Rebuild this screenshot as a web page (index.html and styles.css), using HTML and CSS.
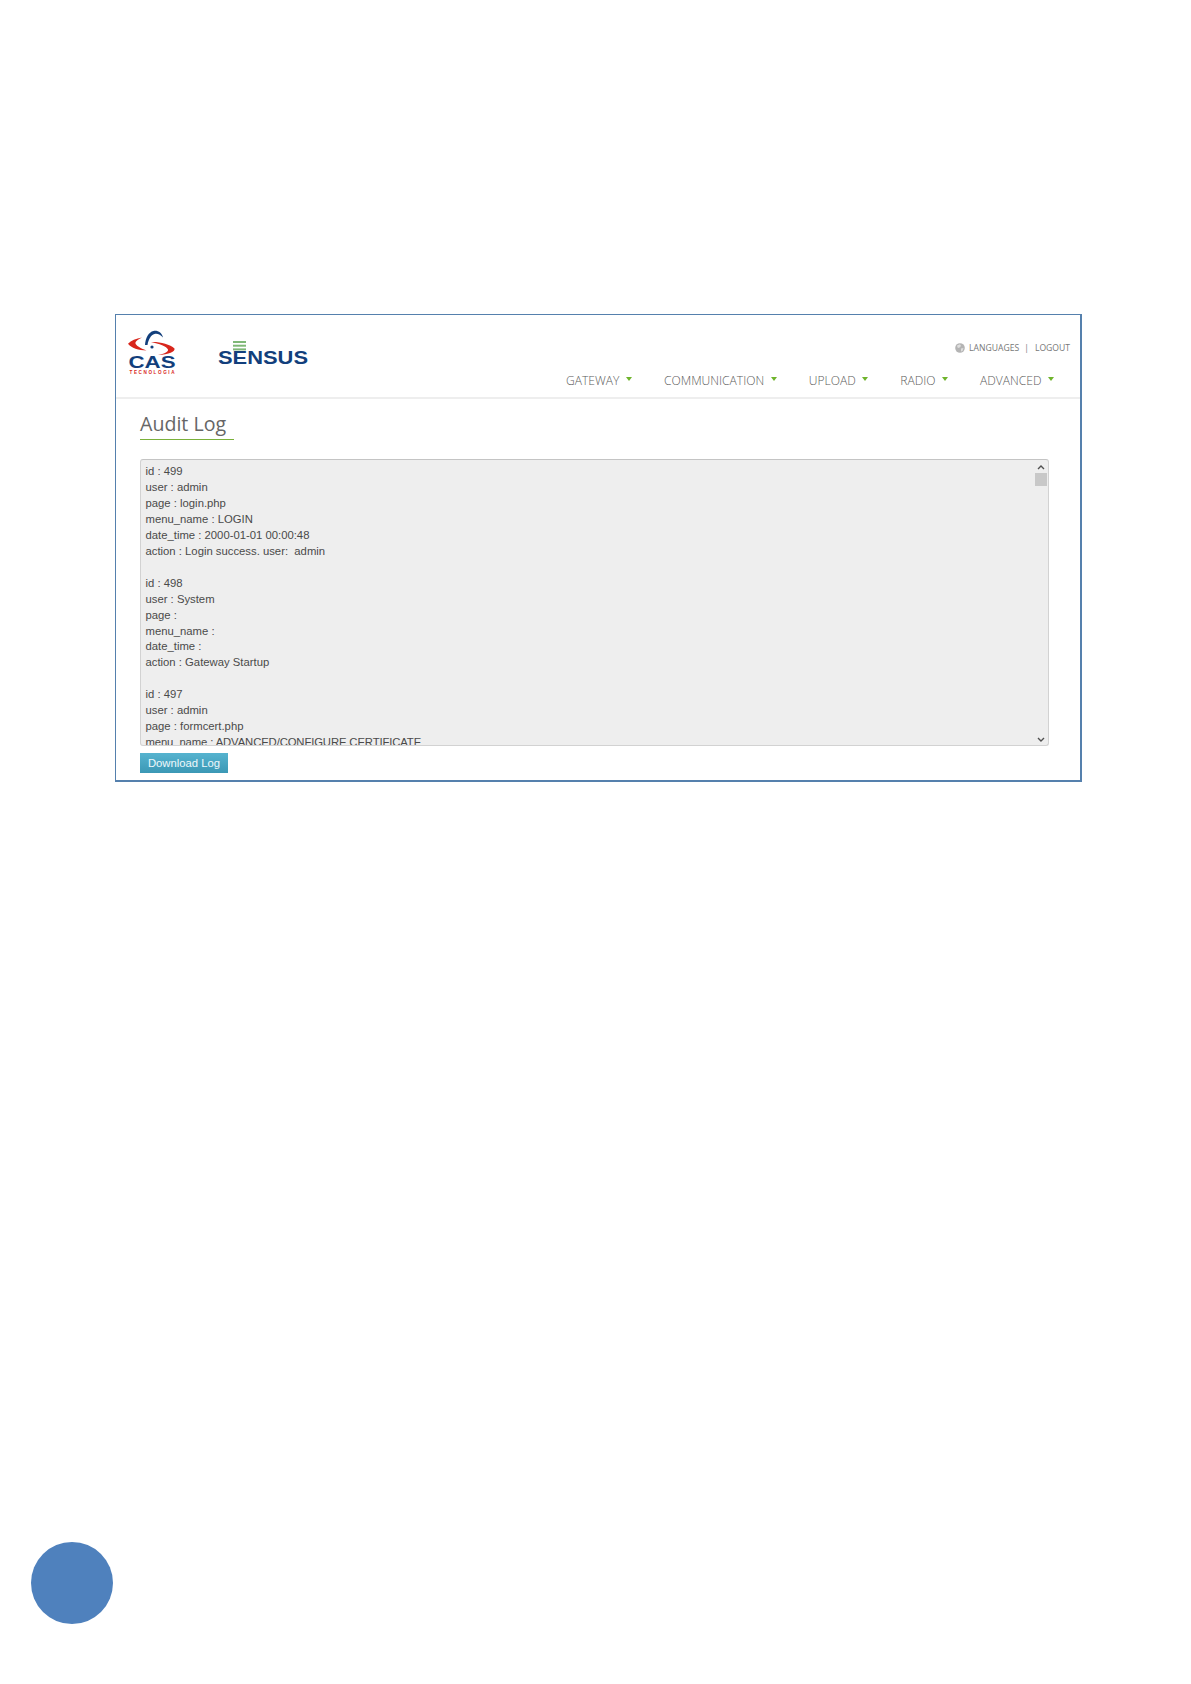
FILE: index.html
```html
<!DOCTYPE html>
<html lang="en">
<head>
<meta charset="utf-8">
<title>Audit Log</title>
<link rel="stylesheet" href="styles.css">
</head>
<body>
<main class="page">
  <section class="frame">
    <header class="header">
      <div class="logos">
        <svg class="logo-cas" viewBox="0 0 54 46" width="54" height="46" aria-label="CAS Tecnologia">
          <path d="M0 13.8 C3 10.5 8 8.5 14 7.5 C10 9.5 7 11.5 7.5 13.5 C8 15.5 12 18 18.5 20.5 C11 20.5 3 18 0 13.8Z" fill="#d8261c"/>
          <path d="M17 15 C17.5 8 20.5 2 25.5 1 C30 0.2 34 3 35 7.5 C32.5 4.8 29.5 3.2 26.5 4 C23 5 20.5 9 19.5 15Z" fill="#123f7c"/>
          <circle cx="24" cy="17" r="1.6" fill="#123f7c"/>
          <path d="M23 12 C31 11.5 42 14 46.5 18.5 C47.5 21.5 41 24.5 30 25 C36 23.8 40.5 22 40 19.5 C39 16.5 31 13.5 23 12Z" fill="#d8261c"/>
          <text class="cas-word" x="24" y="38" text-anchor="middle" textLength="47" lengthAdjust="spacingAndGlyphs">CAS</text>
          <text class="cas-sub" x="24" y="44" text-anchor="middle" textLength="45" lengthAdjust="spacing">TECNOLOGIA</text>
        </svg>
        <svg class="logo-sensus" viewBox="0 0 92 26" width="92" height="26" aria-label="Sensus">
          <rect class="bar" x="15" y="0" width="13" height="2"/>
          <rect class="bar" x="15" y="3.7" width="13" height="2"/>
          <rect class="bar" x="15" y="7.4" width="13" height="2"/>
          <text class="sensus-word" x="0" y="23" textLength="90" lengthAdjust="spacingAndGlyphs">SENSUS</text>
        </svg>
      </div>
      <div class="header-right">
        <div class="util">
          <svg class="globe" viewBox="0 0 10 10" width="10" height="10" aria-hidden="true">
            <circle cx="5" cy="5" r="4.8" fill="#b4b4b4"/>
            <path d="M2 2.5 L5 1.2 L6 3 L4 5 L2.5 4.5Z M6 5.5 L8.5 5 L7.5 8 L6 8.5Z" fill="#dedede"/>
          </svg>
          <span class="util-link">LANGUAGES</span>
          <span class="util-sep">|</span>
          <span class="util-link">LOGOUT</span>
        </div>
        <nav class="nav">
          <span class="nav-item">GATEWAY<i class="caret"></i></span>
          <span class="nav-item">COMMUNICATION<i class="caret"></i></span>
          <span class="nav-item">UPLOAD<i class="caret"></i></span>
          <span class="nav-item">RADIO<i class="caret"></i></span>
          <span class="nav-item">ADVANCED<i class="caret"></i></span>
        </nav>
      </div>
    </header>
    <div class="content">
      <h1 class="title">Audit Log</h1>
      <div class="logbox">
        <div class="logtext">
          <div class="line">id : 499</div>
          <div class="line">user : admin</div>
          <div class="line">page : login.php</div>
          <div class="line">menu_name : LOGIN</div>
          <div class="line">date_time : 2000-01-01 00:00:48</div>
          <div class="line">action : Login success. user:  admin</div>
          <div class="line blank"></div>
          <div class="line">id : 498</div>
          <div class="line">user : System</div>
          <div class="line">page :</div>
          <div class="line">menu_name :</div>
          <div class="line">date_time :</div>
          <div class="line">action : Gateway Startup</div>
          <div class="line blank"></div>
          <div class="line">id : 497</div>
          <div class="line">user : admin</div>
          <div class="line">page : formcert.php</div>
          <div class="line tight">menu_name : ADVANCED/CONFIGURE CERTIFICATE</div>
        </div>
        <div class="scrollbar">
          <svg class="chev" viewBox="0 0 8 5" width="8" height="5" aria-hidden="true"><path d="M1 4 L4 1 L7 4" fill="none" stroke="#505050" stroke-width="1.4"/></svg>
          <div class="thumb"></div>
          <svg class="chev chev-down" viewBox="0 0 8 5" width="8" height="5" aria-hidden="true"><path d="M1 1 L4 4 L7 1" fill="none" stroke="#505050" stroke-width="1.4"/></svg>
        </div>
      </div>
      <button class="btn" type="button">Download Log</button>
    </div>
  </section>
  <div class="page-dot"></div>
</main>
</body>
</html>
```
FILE: styles.css
```css
html, body { margin: 0; padding: 0; background: #fff; }
.page { width: 1191px; height: 1684px; padding: 314px 0 0 31px; box-sizing: border-box; overflow: hidden; }
.frame { margin-left: 84px; width: 967px; height: 468px; box-sizing: border-box; border: 2px solid #5580ad; border-width: 1.5px 2px 2px 1.5px; background: #fff; display: flex; flex-direction: column; }
.header { height: 84px; flex: none; box-sizing: border-box; border-bottom: 2px solid #eeeeee; display: flex; justify-content: space-between; padding: 0 10px 0 12px; }
.logos { display: flex; align-items: flex-start; gap: 35.5px; padding-top: 15px; }
.logo-cas, .logo-sensus { overflow: visible; }
.logo-sensus { margin-top: 11px; }
.cas-word { font: 700 16px "Liberation Sans", sans-serif; fill: #123f7c; }
.cas-sub { font: 700 4.6px "Liberation Sans", sans-serif; fill: #d8261c; }
.bar { fill: #7fb877; }
.sensus-word { font: 700 18px "Liberation Sans", sans-serif; fill: #123f7c; }
.header-right { display: flex; flex-direction: column; align-items: flex-end; }
.util { display: flex; align-items: center; margin-top: 27px; height: 12px; font: 400 8.6px "Open Sans", sans-serif; color: #777; }
.globe { margin-right: 4px; }
.util-sep { margin: 0 6px 0 5px; }
.nav { display: flex; gap: 32px; margin-top: 18px; padding-right: 16px; font: 300 12.1px "Open Sans", sans-serif; color: #5c5c5c; }
.nav-item { display: flex; align-items: center; height: 16px; }
.caret { width: 0; height: 0; margin: 0 0 2px 6.5px; border: 3px solid transparent; border-top: 4px solid #6fb42c; border-bottom: 0; }
.content { padding: 11px 0 0 24px; }
.title { display: inline-block; margin: 0; width: 94px; height: 30px; box-sizing: border-box; border-bottom: 1px solid #7ab03a; font: 400 19.6px/28px "Open Sans", sans-serif; color: #666; white-space: nowrap; }
.logbox { position: relative; width: 909px; height: 287px; margin-top: 19px; box-sizing: border-box; border: 1px solid #d2d2d2; border-top-color: #c4c4c4; border-radius: 3px; background: #eeeeee; overflow: hidden; }
.logtext { padding: 4px 0 0 4.5px; font: 400 11.3px/15.95px "Liberation Sans", sans-serif; color: #4a4a4a; }
.line { white-space: pre; }
.blank { height: 15.95px; }
.tight { letter-spacing: -.12px; }
.scrollbar { position: absolute; top: 0; right: 0; bottom: 0; width: 15px; display: flex; flex-direction: column; align-items: center; padding-top: 5px; box-sizing: border-box; }
.chev { flex: none; }
.thumb { flex: none; width: 12px; height: 13px; margin-top: 3px; background: #c8c8c8; }
.chev-down { margin-top: auto; margin-bottom: 3px; }
.btn { display: block; width: 88px; height: 20px; margin-top: 7px; padding: 0; border: 0; background: linear-gradient(#56b3cf, #3b98b5); color: #eef8fb; font: 400 11.3px "Liberation Sans", sans-serif; }
.page-dot { width: 82px; height: 82px; margin-top: 760px; border-radius: 50%; background: #4f81bd; }
```
